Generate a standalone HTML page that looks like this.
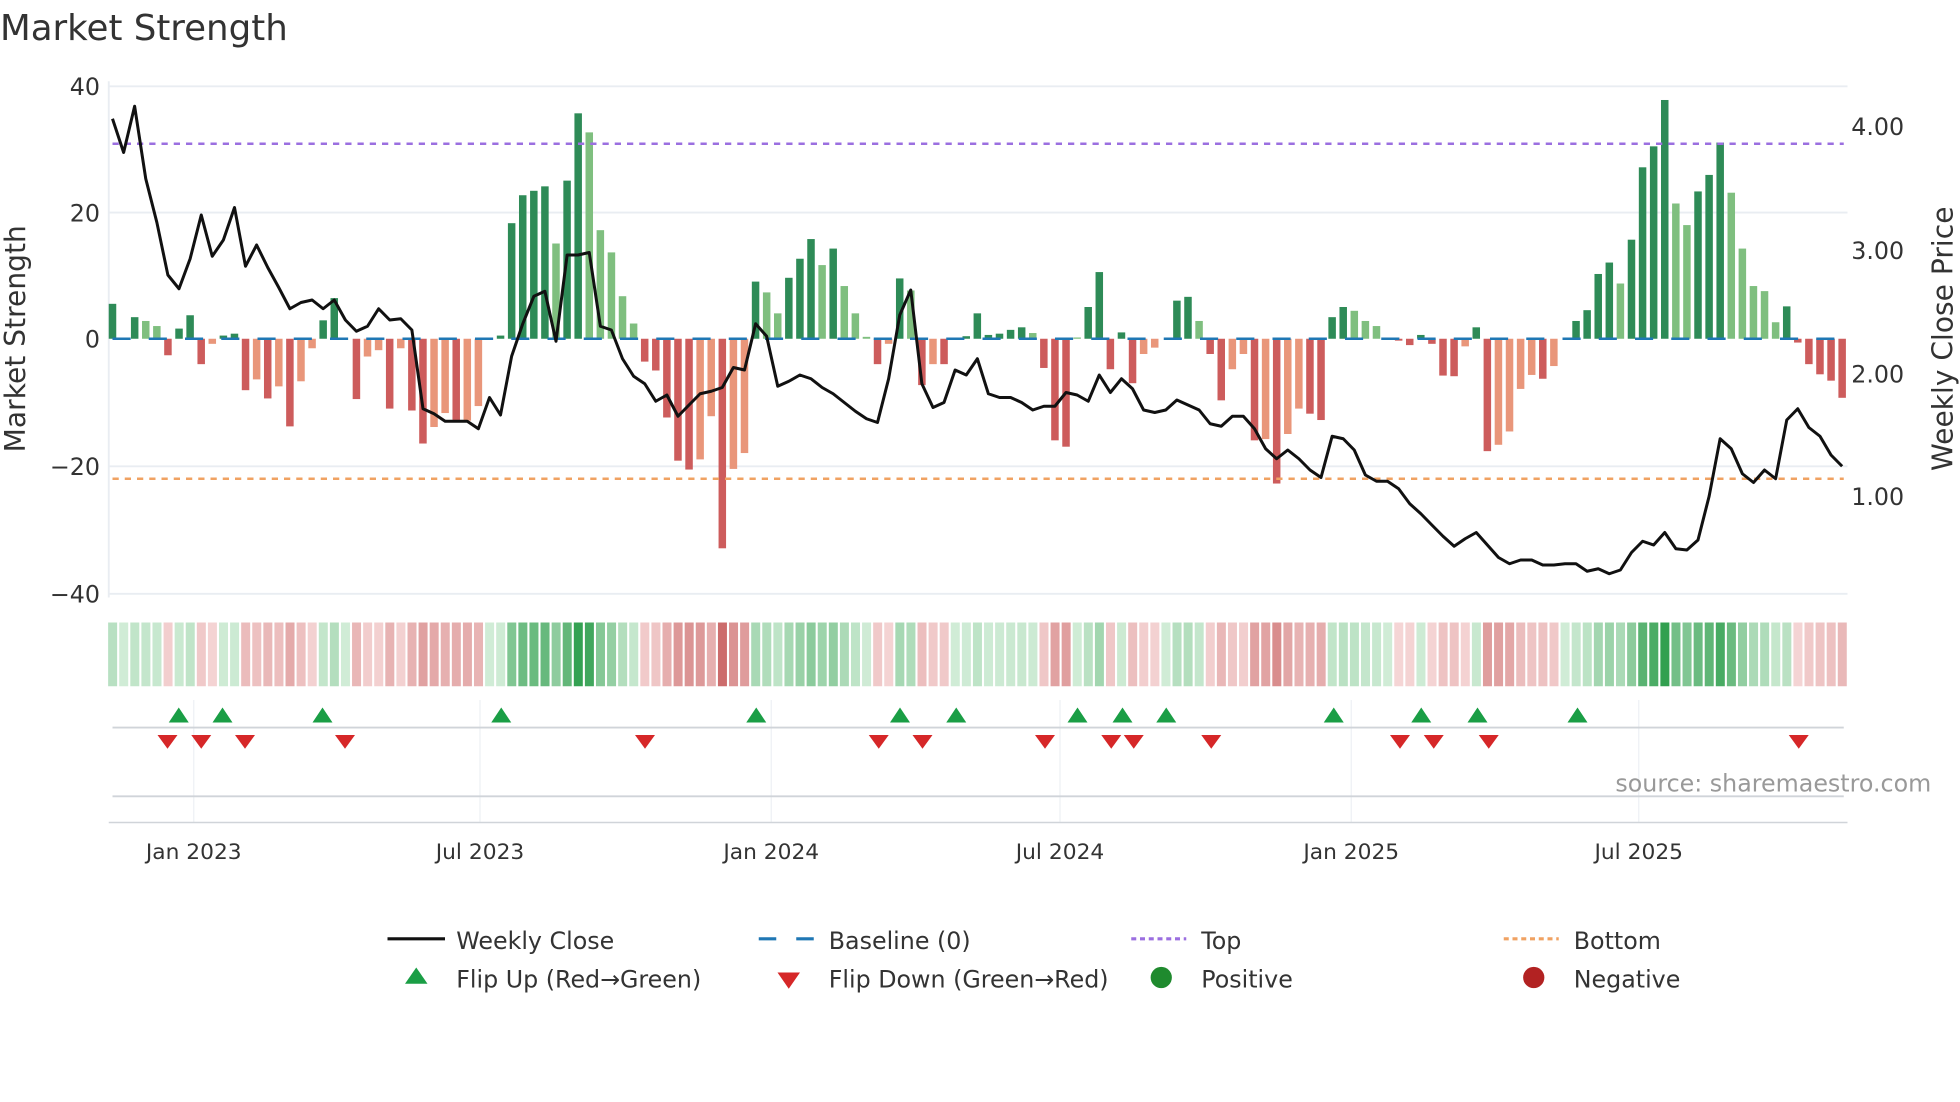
<!DOCTYPE html>
<html><head><meta charset="utf-8">
<style>
html,body{margin:0;padding:0;background:#fff;}
svg{display:block;font-family:"DejaVu Sans","Liberation Sans",sans-serif;}
</style></head>
<body>
<svg id="c" width="1960" height="1102" viewBox="0 0 1568 881.6" xmlns="http://www.w3.org/2000/svg">
<rect width="1568" height="882" fill="#fff"/>
<text x="0" y="32" font-size="28.5" fill="#333">Market Strength</text>
<g stroke="#e9edf2" stroke-width="1.5">
<line x1="87" y1="69" x2="1478" y2="69"/>
<line x1="87" y1="170" x2="1478" y2="170"/>
<line x1="87" y1="373" x2="1478" y2="373"/>
<line x1="87" y1="475" x2="1478" y2="475"/>
<line x1="87" y1="65" x2="87" y2="478"/>
</g>
<g stroke="#eef1f4" stroke-width="1">
<line x1="155" y1="560" x2="155" y2="658"/><line x1="384" y1="560" x2="384" y2="658"/>
<line x1="617" y1="560" x2="617" y2="658"/><line x1="848" y1="560" x2="848" y2="658"/>
<line x1="1081" y1="560" x2="1081" y2="658"/><line x1="1311" y1="560" x2="1311" y2="658"/>
</g>
<g font-size="19" fill="#333" text-anchor="end">
<text x="80" y="76">40</text><text x="80" y="177">20</text><text x="80" y="278">0</text>
<text x="80" y="380">−20</text><text x="80" y="482">−40</text>
</g>
<g font-size="19" fill="#333">
<text x="1481" y="108">4.00</text><text x="1481" y="207">3.00</text>
<text x="1481" y="306">2.00</text><text x="1481" y="404">1.00</text>
</g>
<text transform="translate(20,271) rotate(-90)" font-size="22.5" fill="#333" text-anchor="middle">Market Strength</text>
<text transform="translate(1562,271) rotate(-90)" font-size="22.5" fill="#333" text-anchor="middle">Weekly Close Price</text>
<g id="bars"></g>
<line x1="90" y1="115" x2="1475" y2="115" stroke="#9b6fe0" stroke-width="2" stroke-dasharray="5 4.8"/>
<line x1="90" y1="383" x2="1475" y2="383" stroke="#f0a262" stroke-width="2" stroke-dasharray="5 4.8"/>
<line x1="90" y1="271" x2="1475" y2="271" stroke="#1f77b4" stroke-width="2" stroke-dasharray="14.5 14.5"/>
<polyline id="price" fill="none" stroke="#111" stroke-width="2.4" stroke-linejoin="round"/>
<g id="strip"></g>
<line x1="90" y1="582" x2="1475" y2="582" stroke="#d0d4d9" stroke-width="1.5"/>
<line x1="90" y1="637" x2="1475" y2="637" stroke="#d0d4d9" stroke-width="1.5"/>
<line x1="87" y1="658" x2="1478" y2="658" stroke="#d0d4d9" stroke-width="1.2"/>
<g id="tri"></g>
<text x="1545" y="633" font-size="19" fill="#999" text-anchor="end">source: sharemaestro.com</text>
<g font-size="17.4" fill="#333" text-anchor="middle">
<text x="155" y="687">Jan 2023</text><text x="384" y="687">Jul 2023</text>
<text x="617" y="687">Jan 2024</text><text x="848" y="687">Jul 2024</text>
<text x="1081" y="687">Jan 2025</text><text x="1311" y="687">Jul 2025</text>
</g>
<line x1="310" y1="751" x2="356" y2="751" stroke="#111" stroke-width="2.5"/>
<line x1="607" y1="751" x2="651" y2="751" stroke="#1f77b4" stroke-width="2.5" stroke-dasharray="14 16"/>
<line x1="905" y1="751" x2="949" y2="751" stroke="#9b6fe0" stroke-width="2.5" stroke-dasharray="4 3"/>
<line x1="1203" y1="751" x2="1247" y2="751" stroke="#f0a262" stroke-width="2.5" stroke-dasharray="4 3"/>
<polygon points="324,787 342,787 333,774" fill="#1a9e45"/>
<polygon points="622,778 640,778 631,791" fill="#d62728"/>
<circle cx="929" cy="782" r="8.5" fill="#1f8a2e"/>
<circle cx="1227" cy="782" r="8.5" fill="#b22222"/>
<g font-size="19" fill="#333">
<text x="365" y="759">Weekly Close</text><text x="663" y="759">Baseline (0)</text>
<text x="961" y="759">Top</text><text x="1259" y="759">Bottom</text>
<text x="365" y="790">Flip Up (Red→Green)</text><text x="663" y="790">Flip Down (Green→Red)</text>
<text x="961" y="790">Positive</text><text x="1259" y="790">Negative</text>
</g>
</svg>
<script>
var NS="http://www.w3.org/2000/svg";
var V="5.5D 0D 3.4D 2.8L 2L -2.6R 1.6D 3.7D -4R -0.8S 0.5D 0.8D -8.1R -6.4S -9.4R -7.5S -13.8R -6.7S -1.5S 2.9D 6.4D 0D -9.5R -2.8S -1.8S -11R -1.5S -11.3R -16.5R -13.9S -11.7S -12.8R -12.9S -10.6S 0D 0.5D 18.2D 22.6D 23.3D 24D 15L 24.9D 35.5D 32.5L 17.1L 13.6L 6.7L 2.4L -3.6R -5R -12.4R -19.2R -20.6R -19S -12.2S -33R -20.5S -18S 9D 7.3L 4L 9.6D 12.6D 15.7D 11.6L 14.2D 8.3L 4L 0.3L -4R -0.8S 9.5D 7.6L -7.3R -4S -4R 0D 0.4D 4D 0.6D 0.8D 1.4D 1.8D 0.9L -4.6R -16R -17R 0.2L 5D 10.5D -4.8R 1D -7R -2.4S -1.4S 0D 6D 6.6D 2.8L -2.4R -9.7R -4.8S -2.4S -16R -15.8S -22.8R -15S -11S -11.8R -12.8R 3.4D 5D 4.4L 2.8L 2L 0D -0.3R -1R 0.6D -0.8R -5.8R -5.9R -1.2S 1.8D -17.7R -16.7S -14.6S -7.9S -5.7S -6.3R -4.3S 0D 2.8D 4.5D 10.2D 12D 8.7L 15.6D 27D 30.3D 37.6D 21.3L 17.9L 23.2D 25.8D 30.9D 23L 14.2L 8.3L 7.5L 2.6L 5.1D -0.6R -4R -5.6R -6.6R -9.3R".split(" ");
var P=[95,122,85,143,178,220,231,207,172,205,192,166,213,196,214,230,247,242,240,247,240,256,265,261,247,256,255,264,327,331,337,337,337,343,318,332,285,259,237,233,273,204,204,202,261,264,287,301,307,321,316,333,324,315,313,310,294,296,259,269,309,305,300,303,310,315,322,329,335,338,303,252,232,307,326,322,296,300,287,315,318,318,322,328,325,325,314,316,321,300,314,303,311,328,330,328,320,324,328,339,341,333,333,343,359,367,360,367,376,382,349,351,360,380,385,385,391,403,411,420,429,437,431,426,436,446,451,448,448,452,452,451,451,457,455,459,456,442,433,436,426,439,440,432,397,351,359,379,386,376,383,336,327,342,349,364,373];
var COL={D:"#2e8b57",L:"#7fbf7f",R:"#cd5c5c",S:"#e9967a"};
var bars=document.getElementById("bars"),strip=document.getElementById("strip");
function mix(a,b,t){return "rgb("+a.map(function(v,k){return Math.round(v+(b[k]-v)*t)}).join(",")+")";}
var pts=[];
for(var i=0;i<V.length;i++){
 var s=V[i],c=s.slice(-1),v=parseFloat(s),x=90+i*8.87;
 if(Math.abs(v)>0.05){
  var y0=271,y1=271-v*5.08;
  var r=document.createElementNS(NS,"rect");
  r.setAttribute("x",x-3);r.setAttribute("width",6);
  r.setAttribute("y",Math.min(y0,y1));r.setAttribute("height",Math.abs(y1-y0));
  r.setAttribute("fill",COL[c]);bars.appendChild(r);
 }
 var t=Math.min(Math.abs(v)/36,1);
 var col=v>=0?mix([208,236,214],[50,160,80],t):mix([245,214,214],[200,98,98],t);
 var q=document.createElementNS(NS,"rect");
 q.setAttribute("x",86.5+i*8.87);q.setAttribute("width",7.2);
 q.setAttribute("y",498);q.setAttribute("height",51);q.setAttribute("fill",col);
 strip.appendChild(q);
 pts.push(x.toFixed(1)+","+P[i]);
}
document.getElementById("price").setAttribute("points",pts.join(" "));
var tri=document.getElementById("tri");
[143,178,258,401,605,720,765,862,898,933,1067,1137,1182,1262].forEach(function(x){
 var p=document.createElementNS(NS,"polygon");
 p.setAttribute("points",(x-8)+",578 "+(x+8)+",578 "+x+",566");p.setAttribute("fill","#1a9e45");tri.appendChild(p);});
[134,161,196,276,516,703,738,836,889,907,969,1120,1147,1191,1439].forEach(function(x){
 var p=document.createElementNS(NS,"polygon");
 p.setAttribute("points",(x-8)+",588 "+(x+8)+",588 "+x+",599");p.setAttribute("fill","#d62728");tri.appendChild(p);});
</script>
</body></html>
